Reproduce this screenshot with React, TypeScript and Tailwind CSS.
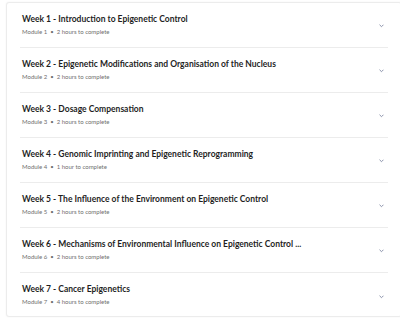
import React from "react";

const weeks = [
  { t: "Week 1 - Introduction to Epigenetic Control", m: "Module 1", h: "2 hours to complete" },
  { t: "Week 2 - Epigenetic Modifications and Organisation of the Nucleus", m: "Module 2", h: "2 hours to complete" },
  { t: "Week 3 - Dosage Compensation", m: "Module 3", h: "2 hours to complete" },
  { t: "Week 4 - Genomic Imprinting and Epigenetic Reprogramming", m: "Module 4", h: "1 hour to complete" },
  { t: "Week 5 - The Influence of the Environment on Epigenetic Control", m: "Module 5", h: "2 hours to complete" },
  { t: "Week 6 - Mechanisms of Environmental Influence on Epigenetic Control ...", m: "Module 6", h: "2 hours to complete" },
  { t: "Week 7 - Cancer Epigenetics", m: "Module 7", h: "4 hours to complete" },
];

function Chevron() {
  return (
    <svg width="5" height="4" viewBox="0 0 5 4" className="shrink-0 mt-[2px]">
      <path d="M0.8 1 L2.5 2.7 L4.2 1" fill="none" stroke="#7d86a0" strokeWidth="0.9" strokeLinecap="round" strokeLinejoin="round" />
    </svg>
  );
}

export default function App() {
  return (
    <div className="w-[400px] h-[318px] overflow-hidden bg-white pt-[2px] pl-[6px]" style={{ fontFamily: "Lato, 'Open Sans', sans-serif" }}>
      <div className="w-[396px] h-[315px] rounded-[3px] border border-[#ececec] bg-white shadow-[0_0_2px_rgba(0,0,0,0.06)] px-[13px]">
        {weeks.map((w, i) => (
          <div
            key={i}
            className={`h-[45px] flex items-center justify-between pl-[2px] pr-[4px] ${i < weeks.length - 1 ? "border-b border-[#ececec]" : ""}`}
          >
            <div className="flex flex-col -mt-[1px]">
              <div className="text-[8.5px] leading-[11px] font-bold text-[#1f1f1f] whitespace-nowrap">{w.t}</div>
              <div className="mt-[3px] text-[6px] leading-[8px] text-[#6f6f6f] whitespace-nowrap flex items-center">
                <span>{w.m}</span>
                <span className="mx-[3px]">•</span>
                <span>{w.h}</span>
              </div>
            </div>
            <Chevron />
          </div>
        ))}
      </div>
    </div>
  );
}
